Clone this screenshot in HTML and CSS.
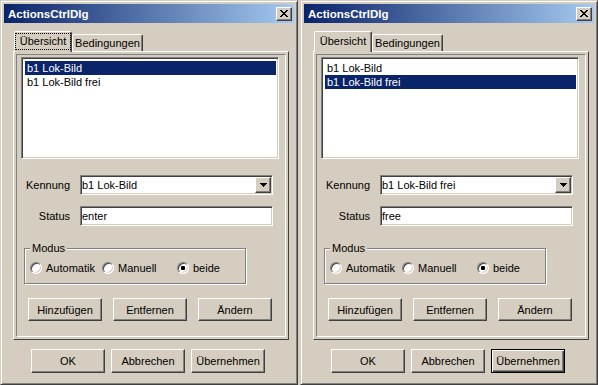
FILE: index.html
```html
<!DOCTYPE html>
<html lang="de">
<head>
<meta charset="utf-8">
<title>ActionsCtrlDlg</title>
<link rel="stylesheet" href="styles.css">
</head>
<body>
<div class="desk">

  <div class="win">
    <div class="titlebar">
      <span class="title">ActionsCtrlDlg</span>
      <span class="close"><svg width="8" height="7" viewBox="0 0 8 7" shape-rendering="crispEdges"><path d="M0 0h2v1H0z M6 0h2v1H6z M1 1h2v1H1z M5 1h2v1H5z M2 2h4v1H2z M3 3h2v1H3z M2 4h4v1H2z M1 5h2v1H1z M5 5h2v1H5z M0 6h2v1H0z M6 6h2v1H6z"/></svg></span>
    </div>
    <div class="tabs">
      <div class="tab active"><span class="focus">Übersicht</span></div>
      <div class="tab">Bedingungen</div>
    </div>
    <div class="panel">
      <div class="panel-inner">
        <div class="list">
          <div class="item sel">b1 Lok-Bild</div>
          <div class="item">b1 Lok-Bild frei</div>
        </div>
        <div class="field first">
          <span class="lbl">Kennung</span>
          <div class="edit combo"><span>b1 Lok-Bild</span><span class="dd"><svg width="7" height="4" viewBox="0 0 7 4" shape-rendering="crispEdges"><path d="M0 0h7v1H0z M1 1h5v1H1z M2 2h3v1H2z M3 3h1v1H3z"/></svg></span></div>
        </div>
        <div class="field">
          <span class="lbl">Status</span>
          <div class="edit">enter</div>
        </div>
        <fieldset class="group">
          <legend>Modus</legend>
          <div class="opts">
            <span class="opt o1"><span class="radio"></span>Automatik</span>
            <span class="opt o2"><span class="radio"></span>Manuell</span>
            <span class="opt"><span class="radio on"></span>beide</span>
          </div>
        </fieldset>
        <div class="btn-row">
          <button class="btn">Hinzufügen</button>
          <button class="btn">Entfernen</button>
          <button class="btn">Ändern</button>
        </div>
      </div>
    </div>
    <div class="dlg-btns">
      <button class="btn tall">OK</button>
      <button class="btn tall">Abbrechen</button>
      <button class="btn tall">Übernehmen</button>
    </div>
  </div>

  <div class="win">
    <div class="titlebar">
      <span class="title">ActionsCtrlDlg</span>
      <span class="close"><svg width="8" height="7" viewBox="0 0 8 7" shape-rendering="crispEdges"><path d="M0 0h2v1H0z M6 0h2v1H6z M1 1h2v1H1z M5 1h2v1H5z M2 2h4v1H2z M3 3h2v1H3z M2 4h4v1H2z M1 5h2v1H1z M5 5h2v1H5z M0 6h2v1H0z M6 6h2v1H6z"/></svg></span>
    </div>
    <div class="tabs">
      <div class="tab active"><span class="nofocus">Übersicht</span></div>
      <div class="tab">Bedingungen</div>
    </div>
    <div class="panel">
      <div class="panel-inner">
        <div class="list">
          <div class="item">b1 Lok-Bild</div>
          <div class="item sel">b1 Lok-Bild frei</div>
        </div>
        <div class="field first">
          <span class="lbl">Kennung</span>
          <div class="edit combo"><span>b1 Lok-Bild frei</span><span class="dd"><svg width="7" height="4" viewBox="0 0 7 4" shape-rendering="crispEdges"><path d="M0 0h7v1H0z M1 1h5v1H1z M2 2h3v1H2z M3 3h1v1H3z"/></svg></span></div>
        </div>
        <div class="field">
          <span class="lbl">Status</span>
          <div class="edit">free</div>
        </div>
        <fieldset class="group">
          <legend>Modus</legend>
          <div class="opts">
            <span class="opt o1"><span class="radio"></span>Automatik</span>
            <span class="opt o2"><span class="radio"></span>Manuell</span>
            <span class="opt"><span class="radio on"></span>beide</span>
          </div>
        </fieldset>
        <div class="btn-row">
          <button class="btn">Hinzufügen</button>
          <button class="btn">Entfernen</button>
          <button class="btn">Ändern</button>
        </div>
      </div>
    </div>
    <div class="dlg-btns">
      <button class="btn tall">OK</button>
      <button class="btn tall">Abbrechen</button>
      <button class="btn tall default">Übernehmen</button>
    </div>
  </div>

</div>
</body>
</html>
```

FILE: styles.css
```css
:root {
  --face: #d5cdbf;
  --shadow: #808080;
  --dark: #404040;
  --sel: #0a246a;
}
* { box-sizing: border-box; }
html, body { margin: 0; padding: 0; }
body {
  width: 598px;
  height: 385px;
  overflow: hidden;
  background: var(--face);
  font-family: "Liberation Sans", Arial, sans-serif;
  font-size: 11px;
  color: #000;
}
.desk {
  display: flex;
  gap: 2px;
  height: 385px;
}
.win {
  flex: 1;
  height: 385px;
  display: flex;
  flex-direction: column;
  padding: 3px;
  background: var(--face);
  border: 1px solid;
  border-color: var(--face) var(--dark) var(--dark) var(--face);
  box-shadow: inset 1px 1px 0 #fff, inset -1px -1px 0 var(--shadow);
}
.titlebar {
  height: 19px;
  display: flex;
  align-items: center;
  padding: 0 2px 0 4px;
  background: linear-gradient(to right, #0a246a, #a6caf0);
}
.title {
  color: #fff;
  font-weight: bold;
  font-size: 11.5px;
}
.close {
  margin-left: auto;
  width: 16px;
  height: 14px;
  display: flex;
  align-items: center;
  justify-content: center;
  background: var(--face);
  border: 1px solid;
  border-color: #fff var(--dark) var(--dark) #fff;
  box-shadow: inset -1px -1px 0 var(--shadow);
}
.tabs {
  display: flex;
  align-items: flex-end;
  height: 21px;
  margin: 7px 0 0 10px;
}
.tab {
  width: 71px;
  height: 17px;
  display: flex;
  align-items: center;
  justify-content: center;
  background: var(--face);
  border: 1px solid;
  border-bottom: none;
  border-color: #fff var(--dark) transparent #fff;
  box-shadow: inset -1px 0 0 var(--shadow);
  border-radius: 2px 2px 0 0;
}
.tab.active {
  width: 58px;
  height: 21px;
  margin-bottom: -1px;
  padding-bottom: 2px;
  position: relative;
  z-index: 1;
}
.focus {
  border: 1px dotted #000;
  padding: 1px 4px;
  line-height: 13px;
}
.nofocus {
  border: 1px solid transparent;
  padding: 1px 4px;
  line-height: 13px;
}
.panel {
  margin: 0 5px 0 9px;
  height: 289px;
  border: 1px solid;
  border-color: #fff var(--dark) var(--dark) #fff;
  padding: 2px;
}
.panel-inner {
  height: 100%;
  border: 1px solid;
  border-color: var(--shadow) #fff #fff var(--shadow);
  display: flex;
  flex-direction: column;
  align-items: flex-start;
}
.list {
  margin: 2px 0 0 4px;
  width: 258px;
  height: 102px;
  background: #fff;
  border: 1px solid;
  border-color: var(--shadow) #fff #fff var(--shadow);
  box-shadow: inset 1px 1px 0 var(--dark), inset -1px -1px 0 var(--face);
  padding: 3px 2px 0 3px;
}
.item {
  height: 14px;
  line-height: 14px;
  padding-left: 2px;
  white-space: nowrap;
}
.item.sel {
  background: var(--sel);
  color: #fff;
}
.field {
  display: flex;
  align-items: center;
  margin-top: 11px;
}
.field.first { margin-top: 16px; }
.lbl {
  width: 53px;
  text-align: right;
  margin-right: 10px;
}
.edit {
  width: 193px;
  height: 20px;
  display: flex;
  align-items: center;
  background: #fff;
  border: 1px solid;
  border-color: var(--shadow) #fff #fff var(--shadow);
  box-shadow: inset 1px 1px 0 var(--dark), inset -1px -1px 0 var(--face);
  padding-left: 1px;
}
.dd {
  margin-left: auto;
  margin-right: 1px;
  width: 16px;
  height: 16px;
  display: flex;
  align-items: center;
  justify-content: center;
  background: var(--face);
  border: 1px solid;
  border-color: #fff var(--dark) var(--dark) #fff;
  box-shadow: inset -1px -1px 0 var(--shadow);
}
.group {
  margin: 16px 0 0 7px;
  width: 222px;
  padding: 6px 0 8px 5px;
  border: 1px solid var(--shadow);
  box-shadow: 1px 1px 0 #fff, inset 1px 1px 0 #fff;
  min-inline-size: 0;
}
.group legend {
  padding: 0 2px;
  line-height: 13px;
  background: var(--face);
}
.opts {
  display: flex;
  align-items: center;
  height: 14px;
}
.opt {
  display: flex;
  align-items: center;
  gap: 4px;
}
.opt.o1 { width: 72px; }
.opt.o2 { width: 75px; }
.radio {
  width: 12px;
  height: 12px;
  border-radius: 50%;
  background: #fff;
  border: 1px solid;
  border-color: var(--shadow) #fff #fff var(--shadow);
  box-shadow: inset 1px 1px 0 var(--dark), inset -1px -1px 0 var(--face);
  display: flex;
  align-items: center;
  justify-content: center;
}
.radio.on::after {
  content: "";
  width: 4px;
  height: 4px;
  border-radius: 1px;
  background: #000;
}
.btn-row {
  display: flex;
  gap: 11px;
  margin: 14px 0 0 11px;
}
.btn {
  width: 74px;
  height: 23px;
  margin: 0;
  padding: 0;
  font: inherit;
  color: #000;
  background: var(--face);
  border: 1px solid;
  border-color: #fff var(--dark) var(--dark) #fff;
  box-shadow: inset -1px -1px 0 var(--shadow);
  display: flex;
  align-items: center;
  justify-content: center;
}
.btn.tall { height: 24px; }
.btn.default {
  border-color: #000;
  box-shadow: inset 1px 1px 0 #fff, inset -1px -1px 0 var(--dark), inset -2px -2px 0 var(--shadow);
}
.dlg-btns {
  display: flex;
  gap: 6px;
  margin: 9px 0 0 27px;
}
```
